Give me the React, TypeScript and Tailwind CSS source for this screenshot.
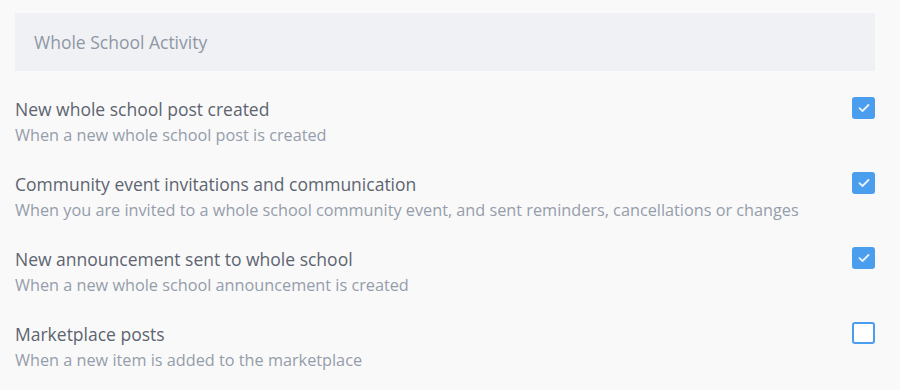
const rows = [
  {
    title: "New whole school post created",
    sub: "When a new whole school post is created",
    checked: true,
  },
  {
    title: "Community event invitations and communication",
    sub: "When you are invited to a whole school community event, and sent reminders, cancellations or changes",
    checked: true,
  },
  {
    title: "New announcement sent to whole school",
    sub: "When a new whole school announcement is created",
    checked: true,
  },
  {
    title: "Marketplace posts",
    sub: "When a new item is added to the marketplace",
    checked: false,
  },
];

const Check = ({ checked }: { checked: boolean }) =>
  checked ? (
    <div className="w-[23px] h-[22px] rounded-[3px] bg-[#4b9ded] flex items-center justify-center">
      <svg width="12" height="10" viewBox="0 0 12 10" fill="none">
        <path d="M1.5 5.2 L4.5 8 L10.5 2" stroke="#e8f2fd" strokeWidth="1.8" strokeLinecap="round" strokeLinejoin="round" />
      </svg>
    </div>
  ) : (
    <div className="w-[23px] h-[22px] rounded-[3px] border-2 border-[#4b9ded] bg-white" />
  );

export default function App() {
  return (
    <div className="w-[900px] h-[390px] bg-[#f9f9f9] pt-[13px] pl-[15px] pr-[25px] font-['Open_Sans',sans-serif] overflow-hidden">
      <div className="h-[58px] bg-[#eff1f4] flex items-center px-[19px] text-[17.5px] text-[#8f97a5]">
        Whole School Activity
      </div>
      <div className="mt-[26px] flex flex-col gap-[25px]">
        {rows.map((r) => (
          <div key={r.title} className="flex justify-between items-start">
            <div>
              <div className="text-[17.5px] leading-[24px] text-[#5d6470]">{r.title}</div>
              <div className="mt-[2px] text-[16.25px] leading-[24px] text-[#959dab]">{r.sub}</div>
            </div>
            <div>
              <Check checked={r.checked} />
            </div>
          </div>
        ))}
      </div>
    </div>
  );
}
